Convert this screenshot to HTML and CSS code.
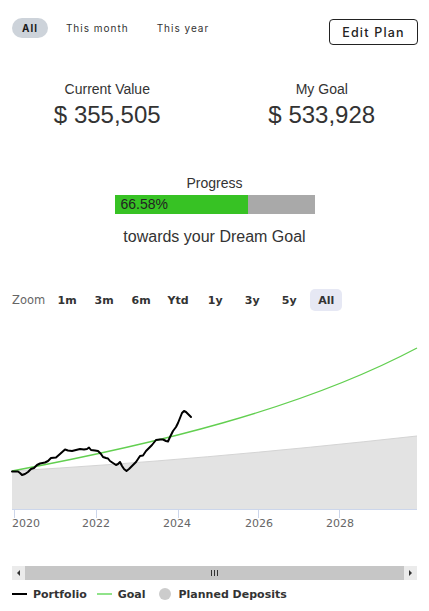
FILE: index.html
```html
<!DOCTYPE html>
<html lang="en">
<head>
    <meta charset="UTF-8">
    <meta name="viewport" content="width=device-width, initial-scale=1.0">
    <title>Dream Goal</title>
    <link rel="stylesheet" href="styles.css">
</head>
<body>
    <div class="page">
        <div class="top-bar">
            <div class="period-tabs">
                <button class="tab active">All</button>
                <button class="tab">This month</button>
                <button class="tab">This year</button>
            </div>
            <button class="edit-btn">Edit Plan</button>
        </div>

        <div class="stats">
            <div class="stat">
                <div class="stat-label">Current Value</div>
                <div class="stat-value">$ 355,505</div>
            </div>
            <div class="stat">
                <div class="stat-label">My Goal</div>
                <div class="stat-value">$ 533,928</div>
            </div>
        </div>

        <div class="progress">
            <div class="progress-label">Progress</div>
            <div class="progress-bar">
                <div class="progress-fill" style="width: 66.58%">66.58%</div>
            </div>
            <div class="progress-note">towards your Dream Goal</div>
        </div>

        <div class="zoom-row">
            <span class="zoom-label">Zoom</span>
            <button class="zoom-btn">1m</button>
            <button class="zoom-btn">3m</button>
            <button class="zoom-btn">6m</button>
            <button class="zoom-btn">Ytd</button>
            <button class="zoom-btn">1y</button>
            <button class="zoom-btn">3y</button>
            <button class="zoom-btn">5y</button>
            <button class="zoom-btn selected">All</button>
        </div>

        <svg class="chart" width="429" height="220" viewBox="0 0 429 220">
            <g transform="translate(0,-320)">
                <!-- planned deposits -->
                <path d="M12,471 Q200,460 417,436 L417,509 L12,509 Z" fill="#e3e3e3"/>
                <path d="M12,471 Q200,460 417,436" fill="none" stroke="#d4d4d4" stroke-width="1"/>
                <!-- goal -->
                <path d="M12,471 C150,445 300,410 417,348" fill="none" stroke="#62cf50" stroke-width="1.3"/>
                <!-- portfolio -->
                <polyline fill="none" stroke="#000" stroke-width="2" stroke-linejoin="round" stroke-linecap="round"
                    points="12,471.5 18,471.5 20,473 22,475 25,474 28,472 31,469 34,468 37,465 40,463.5 45,462.5 48,461 51,458 56,457.5 60,454 65,449.5 68,450.5 72,451 76,450 80,449 84,449.5 87,449 89,447.5 91,450 95,450.5 98,451 101,454 103,457 106,458 108,458.5 110,461 113,463 116,465 118,464 120,462 122,466 124,469 126.5,471 129,469 133,465 136,462 140,456 143,455.5 146,451 149,448 152,445 156,440 160,439.5 163,439.5 166,441 168,441.5 170,437 173,431 176,427 178,423 180,418 182,413 184,411 186,412 188,414 191,417"/>
                <!-- x axis -->
                <line x1="12" y1="509.5" x2="417" y2="509.5" stroke="#ccd6eb"/>
                <g stroke="#ccd6eb">
                    <line x1="14.5" y1="509" x2="14.5" y2="518"/>
                    <line x1="96.5" y1="509" x2="96.5" y2="518"/>
                    <line x1="178.5" y1="509" x2="178.5" y2="518"/>
                    <line x1="258.5" y1="509" x2="258.5" y2="518"/>
                    <line x1="339.5" y1="509" x2="339.5" y2="518"/>
                </g>
                <g class="axis-label">
                    <text x="26" y="527" text-anchor="middle">2020</text>
                    <text x="96" y="527" text-anchor="middle">2022</text>
                    <text x="177" y="527" text-anchor="middle">2024</text>
                    <text x="259" y="527" text-anchor="middle">2026</text>
                    <text x="340" y="527" text-anchor="middle">2028</text>
                </g>
            </g>
        </svg>

        <div class="scrollbar">
            <div class="scroll-btn"><span class="arrow-left"></span></div>
            <div class="scroll-thumb"><span class="grip"></span><span class="grip"></span><span class="grip"></span></div>
            <div class="scroll-btn"><span class="arrow-right"></span></div>
        </div>

        <div class="legend">
            <div class="legend-item"><span class="swatch-line black"></span>Portfolio</div>
            <div class="legend-item"><span class="swatch-line green"></span>Goal</div>
            <div class="legend-item"><span class="swatch-dot"></span>Planned Deposits</div>
        </div>
    </div>
</body>
</html>
```

FILE: styles.css
```css
* {
    box-sizing: border-box;
    margin: 0;
    padding: 0;
}

body {
    font-family: 'Liberation Sans', Arial, sans-serif;
    background: #fff;
    color: #333;
}

.page {
    width: 429px;
}

button {
    font-family: inherit;
    background: transparent;
    border: none;
    cursor: pointer;
}

.top-bar {
    display: flex;
    justify-content: space-between;
    align-items: flex-start;
    padding: 18px 11px 0 12px;
}

.period-tabs {
    display: flex;
    gap: 8px;
}

.tab {
    height: 20px;
    padding: 0 10px;
    border-radius: 10px;
    font-family: Inter, 'DejaVu Sans', sans-serif;
    font-size: 10px;
    font-weight: 400;
    letter-spacing: 1px;
    color: #333;
}

.tab.active {
    background: #cdd3da;
    font-weight: 700;
    color: #1a1a1a;
}

.edit-btn {
    margin-top: 1px;
    width: 89px;
    height: 26px;
    border: 1px solid #222;
    border-radius: 4px;
    font-family: Inter, 'DejaVu Sans', sans-serif;
    font-size: 12.5px;
    font-weight: 500;
    letter-spacing: 1.2px;
    color: #222;
}

.stats {
    display: flex;
    margin-top: 36px;
}

.stat {
    flex: 1;
    text-align: center;
}

.stat-label {
    font-size: 14px;
    line-height: 16px;
}

.stat-value {
    margin-top: 4px;
    font-size: 24px;
    line-height: 28px;
}

.progress {
    margin-top: 46px;
    display: flex;
    flex-direction: column;
    align-items: center;
}

.progress-label {
    font-size: 14px;
    line-height: 16px;
}

.progress-bar {
    margin-top: 4px;
    width: 200px;
    height: 19px;
    background: #a9a9a9;
}

.progress-fill {
    height: 100%;
    background: #37c224;
    color: #222;
    font-size: 14px;
    line-height: 19px;
    padding-left: 6px;
}

.progress-note {
    margin-top: 13px;
    font-size: 16px;
    line-height: 20px;
}

.zoom-row {
    display: flex;
    align-items: center;
    gap: 5px;
    margin-top: 42px;
    padding-left: 12px;
    height: 22px;
    font-family: 'DejaVu Sans', Verdana, sans-serif;
}

.zoom-label {
    font-size: 11.5px;
    color: #666;
    margin-right: 1px;
}

.zoom-btn {
    width: 32px;
    height: 22px;
    border-radius: 5px;
    font-family: inherit;
    font-size: 11px;
    font-weight: 700;
    color: #333;
}

.zoom-btn.selected {
    background: #e6e8f4;
}

.chart {
    display: block;
    margin-top: 9px;
}

.axis-label {
    font-family: 'DejaVu Sans', Verdana, sans-serif;
    font-size: 11px;
    fill: #666;
}

.scrollbar {
    display: flex;
    margin: 26px 12px 0;
    height: 14px;
}

.scroll-btn {
    width: 13px;
    background: #ebebeb;
    display: flex;
    align-items: center;
    justify-content: center;
}

.arrow-left {
    border-top: 3px solid transparent;
    border-bottom: 3px solid transparent;
    border-right: 3px solid #333;
}

.arrow-right {
    border-top: 3px solid transparent;
    border-bottom: 3px solid transparent;
    border-left: 3px solid #333;
}

.scroll-thumb {
    flex: 1;
    background: #c6c6c6;
    display: flex;
    align-items: center;
    justify-content: center;
    gap: 2px;
}

.grip {
    width: 1px;
    height: 6px;
    background: #333;
}

.legend {
    display: flex;
    align-items: center;
    margin-top: 6px;
    padding-left: 12px;
    height: 16px;
    gap: 10px;
    font-family: 'DejaVu Sans', Verdana, sans-serif;
    font-size: 11px;
    font-weight: 700;
    color: #333;
}

.legend-item {
    display: flex;
    align-items: center;
}

.swatch-line {
    width: 15px;
    height: 2px;
    margin-right: 6px;
}

.swatch-line.black {
    background: #000;
}

.swatch-line.green {
    background: #90e38a;
}

.swatch-dot {
    width: 12px;
    height: 12px;
    border-radius: 50%;
    background: #cccccc;
    margin: 0 8px 0 3px;
}
```
